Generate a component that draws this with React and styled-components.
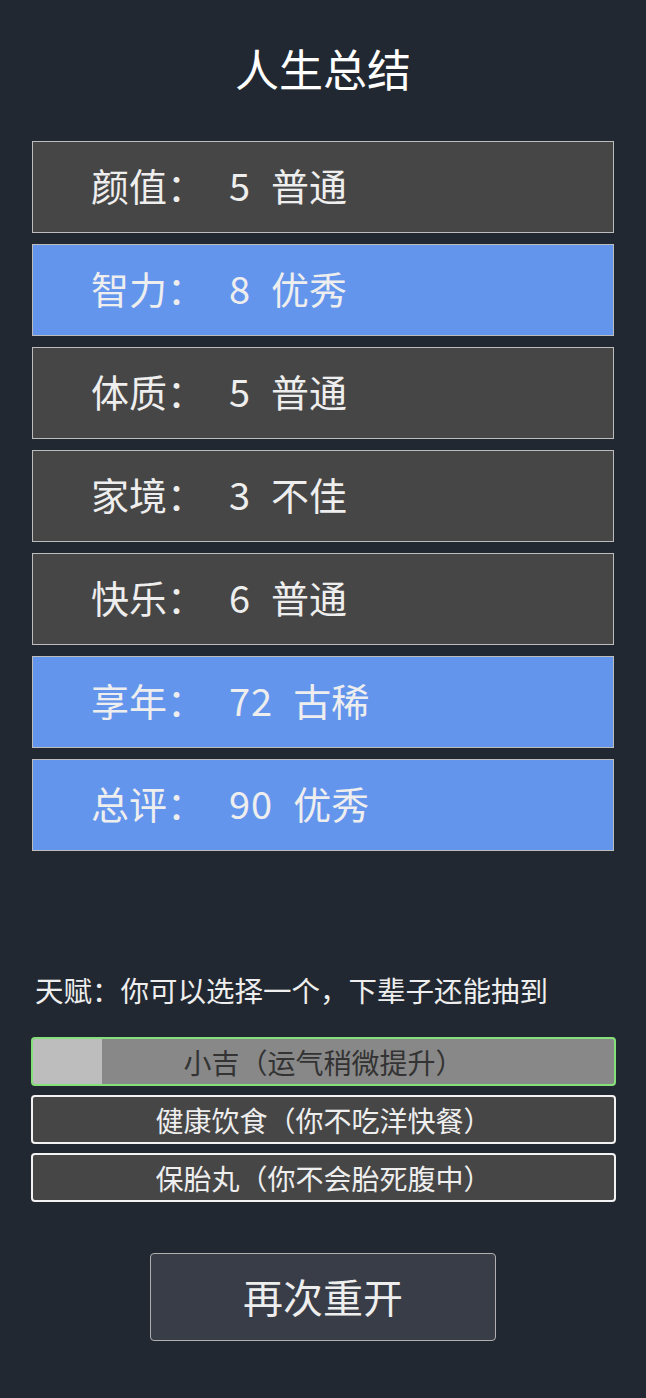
import React from 'react';
import styled, { createGlobalStyle } from 'styled-components';

const GlobalStyle = createGlobalStyle`
  html, body {
    margin: 0;
    padding: 0;
    background: #222831;
  }
  body {
    font-family: "Noto Sans CJK SC", "Noto Sans", sans-serif;
    color: #eeeeee;
  }
`;

const Page = styled.div`
  width: 646px;
  min-height: 1398px;
  box-sizing: border-box;
  padding-top: 42px;
  background: #222831;
`;

const Title = styled.h1`
  margin: 0 0 46px;
  height: 53px;
  font-size: 44px;
  line-height: 53px;
  font-weight: 400;
  text-align: center;
  color: #ffffff;
`;

const Summary = styled.ul`
  list-style: none;
  margin: 0;
  padding: 0 32px;
  display: flex;
  flex-direction: column;
  gap: 11px;
`;

const Row = styled.li`
  height: 92px;
  box-sizing: border-box;
  display: flex;
  align-items: center;
  padding: 0 0 6px 58px;
  border: 1px solid #bcbcbc;
  background: ${(p) => (p.$good ? '#6495ed' : '#464646')};
  font-size: 38px;
  color: #eeeeee;
`;

const Label = styled.span`
  margin-right: 24px;
`;

const Score = styled.span`
  margin-right: 20px;
  letter-spacing: 1px;
`;

const TalentHead = styled.div`
  margin: 122px 0 30px;
  padding-left: 35px;
  font-size: 28.5px;
  line-height: 34px;
  color: #eeeeee;
`;

const TalentList = styled.ul`
  list-style: none;
  margin: 0;
  padding: 0 30px 0 31px;
  display: flex;
  flex-direction: column;
  gap: 9px;
`;

const Talent = styled.li`
  position: relative;
  height: 49px;
  box-sizing: border-box;
  display: flex;
  align-items: center;
  justify-content: center;
  overflow: hidden;
  border-radius: 4px;
  border: 2px solid ${(p) => (p.$picked ? '#86e07a' : '#f2f2f2')};
  background: ${(p) => (p.$picked ? '#888888' : '#464646')};
  color: ${(p) => (p.$picked ? '#333333' : '#eeeeee')};
  font-size: 28px;
`;

const Progress = styled.span`
  position: absolute;
  left: 0;
  top: 0;
  bottom: 0;
  background: #bdbdbd;
`;

const TalentText = styled.span`
  position: relative;
`;

const Footer = styled.div`
  display: flex;
  justify-content: center;
  padding-top: 51px;
`;

const RestartButton = styled.button`
  width: 346px;
  height: 88px;
  padding-bottom: 4px;
  border: 1px solid #b0b0b0;
  border-radius: 4px;
  background: #393d47;
  color: #eeeeee;
  font-family: inherit;
  font-size: 40px;
  cursor: pointer;
`;

const stats = [
  { label: '颜值：', score: '5', word: '普通' },
  { label: '智力：', score: '8', word: '优秀', good: true },
  { label: '体质：', score: '5', word: '普通' },
  { label: '家境：', score: '3', word: '不佳' },
  { label: '快乐：', score: '6', word: '普通' },
  { label: '享年：', score: '72', word: '古稀', good: true },
  { label: '总评：', score: '90', word: '优秀', good: true },
];

const talents = [
  { name: '小吉（运气稍微提升）', picked: true, progress: 69 },
  { name: '健康饮食（你不吃洋快餐）' },
  { name: '保胎丸（你不会胎死腹中）' },
];

export default function App() {
  return (
    <Page>
      <GlobalStyle />
      <Title>人生总结</Title>
      <Summary>
        {stats.map((s) => (
          <Row key={s.label} $good={s.good}>
            <Label>{s.label}</Label>
            <Score>{s.score}</Score>
            <span>{s.word}</span>
          </Row>
        ))}
      </Summary>
      <TalentHead>天赋：你可以选择一个，下辈子还能抽到</TalentHead>
      <TalentList>
        {talents.map((t) => (
          <Talent key={t.name} $picked={t.picked}>
            {t.picked && <Progress style={{ width: `${t.progress}px` }} />}
            <TalentText>{t.name}</TalentText>
          </Talent>
        ))}
      </TalentList>
      <Footer>
        <RestartButton>再次重开</RestartButton>
      </Footer>
    </Page>
  );
}
